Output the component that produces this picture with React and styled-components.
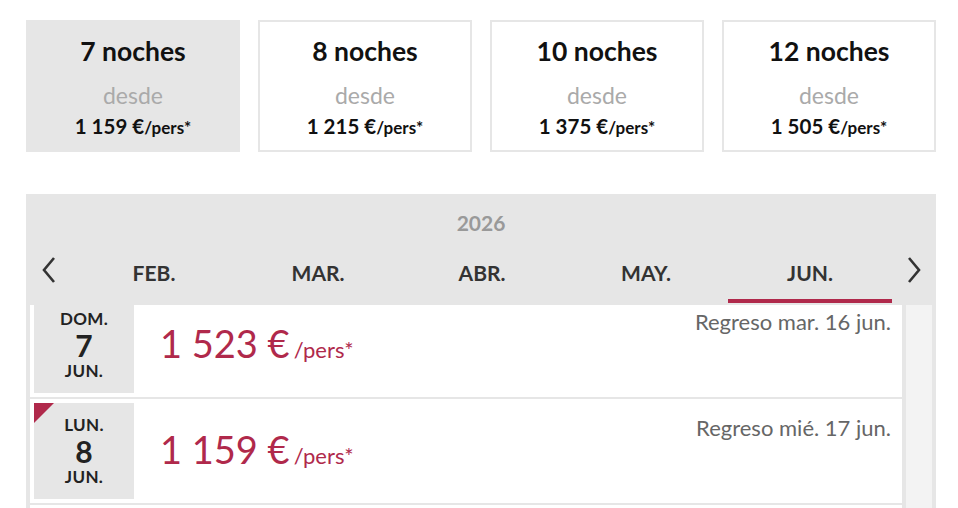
import React from "react";
import styled, { createGlobalStyle } from "styled-components";

const Global = createGlobalStyle`
  html, body { margin: 0; padding: 0; background: #fff; }
  body { font-family: "Lato", "Liberation Sans", sans-serif; overflow: hidden; }
`;

const Page = styled.div`
  padding: 20px 0 0 26px;
  width: 910px;
`;

const Cards = styled.div`
  display: grid;
  grid-template-columns: repeat(4, 214px);
  gap: 18px;
`;

const Card = styled.div`
  box-sizing: border-box;
  height: 132px;
  background: ${(p) => (p.$active ? "#e6e6e6" : "#fff")};
  border: 2px solid #e6e6e6;
  display: flex;
  flex-direction: column;
  align-items: center;
  padding-top: 14px;
`;

const CardTitle = styled.div`
  font-size: 26.5px;
  line-height: 30px;
  font-weight: 700;
  color: #111;
`;

const CardFrom = styled.div`
  margin-top: 15px;
  font-size: 23px;
  line-height: 28px;
  color: #aaa;
`;

const CardPrice = styled.div`
  margin-top: 5px;
  font-size: 20.5px;
  line-height: 24px;
  font-weight: 700;
  color: #111;
  span { font-size: 17px; font-weight: 700; }
`;

const Panel = styled.div`
  margin-top: 42px;
  background: #e6e6e6;
  width: 910px;
`;

const Year = styled.div`
  padding-top: 18px;
  text-align: center;
  font-size: 21px;
  line-height: 22px;
  font-weight: 700;
  color: #999;
`;

const Nav = styled.div`
  display: grid;
  grid-template-columns: 46px repeat(5, 164px) 44px;
  align-items: start;
  padding-bottom: 2px;
`;

const Arrow = styled.button`
  all: unset;
  height: 65px;
  display: flex;
  align-items: center;
  justify-content: ${(p) => (p.$right ? "center" : "flex-start")};
  padding-left: ${(p) => (p.$right ? "0" : "16px")};
  padding-top: 6px;
  box-sizing: border-box;
  cursor: pointer;
`;

const Month = styled.div`
  box-sizing: border-box;
  height: 69px;
  padding-top: 28px;
  text-align: center;
  font-size: 21px;
  line-height: 22px;
  font-weight: 700;
  color: #333;
  border-bottom: 4px solid ${(p) => (p.$active ? "#b0294b" : "transparent")};
`;

const Viewport = styled.div`
  height: 203px;
  overflow: hidden;
  display: flex;
  gap: 4px;
  padding: 0 4px;
`;

const List = styled.div`
  width: 872px;
  margin-top: -12px;
  display: flex;
  flex-direction: column;
  gap: 2px;
`;

const Track = styled.div`
  width: 26px;
  background: #f3f3f3;
`;

const Row = styled.div`
  background: #fff;
  padding: 4px 11px 4px 4px;
  display: flex;
  align-items: center;
  position: relative;
  height: 104px;
  box-sizing: border-box;
  flex-shrink: 0;
`;

const DateBox = styled.div`
  position: relative;
  width: 100px;
  height: 96px;
  background: #e6e6e6;
  display: flex;
  flex-direction: column;
  align-items: center;
  justify-content: center;
  color: #222;
  font-weight: 700;
  flex-shrink: 0;
`;

const Corner = styled.div`
  position: absolute;
  top: 0;
  left: 0;
  width: 0;
  height: 0;
  border-top: 20px solid #b0294b;
  border-right: 20px solid transparent;
`;

const Small = styled.div`
  font-size: 17px;
  line-height: 26px;
  letter-spacing: 0.3px;
`;

const Day = styled.div`
  font-size: 30px;
  line-height: 26px;
`;

const Price = styled.div`
  margin-left: 26px;
  margin-top: -4px;
  color: #b0294b;
  font-size: 38px;
  font-weight: 400;
  span { font-size: 22px; margin-left: 4px; }
`;

const Return = styled.div`
  position: absolute;
  top: 17px;
  right: 11px;
  font-size: 22px;
  line-height: 24px;
  color: #666;
`;

const Chevron = ({ dir }) => (
  <svg width="14" height="26" viewBox="0 0 14 26">
    <path
      d={dir === "left" ? "M12 1 L2 13 L12 25" : "M2 1 L12 13 L2 25"}
      fill="none"
      stroke="#333"
      strokeWidth="2.6"
    />
  </svg>
);

const cards = [
  { n: "7 noches", p: "1 159", active: true },
  { n: "8 noches", p: "1 215" },
  { n: "10 noches", p: "1 375" },
  { n: "12 noches", p: "1 505" },
];

const months = ["FEB.", "MAR.", "ABR.", "MAY.", "JUN."];

const rows = [
  { wd: "DOM.", d: "7", m: "JUN.", price: "1 523", ret: "Regreso mar. 16 jun." },
  { wd: "LUN.", d: "8", m: "JUN.", price: "1 159", ret: "Regreso mié. 17 jun.", best: true },
];

export default function App() {
  return (
    <>
      <Global />
      <Page>
        <Cards>
          {cards.map((c) => (
            <Card key={c.n} $active={c.active}>
              <CardTitle>{c.n}</CardTitle>
              <CardFrom>desde</CardFrom>
              <CardPrice>
                {c.p} €<span>/pers*</span>
              </CardPrice>
            </Card>
          ))}
        </Cards>
        <Panel>
          <Year>2026</Year>
          <Nav>
            <Arrow aria-label="anterior">
              <Chevron dir="left" />
            </Arrow>
            {months.map((m) => (
              <Month key={m} $active={m === "JUN."}>
                {m}
              </Month>
            ))}
            <Arrow $right aria-label="siguiente">
              <Chevron dir="right" />
            </Arrow>
          </Nav>
          <Viewport>
            <List>
              {rows.map((r) => (
                <Row key={r.d}>
                  <DateBox>
                    {r.best && <Corner />}
                    <Small>{r.wd}</Small>
                    <Day>{r.d}</Day>
                    <Small>{r.m}</Small>
                  </DateBox>
                  <Price>
                    {r.price} €<span>/pers*</span>
                  </Price>
                  <Return>{r.ret}</Return>
                </Row>
              ))}
              <Row aria-hidden="true" />
            </List>
            <Track />
          </Viewport>
        </Panel>
      </Page>
    </>
  );
}
